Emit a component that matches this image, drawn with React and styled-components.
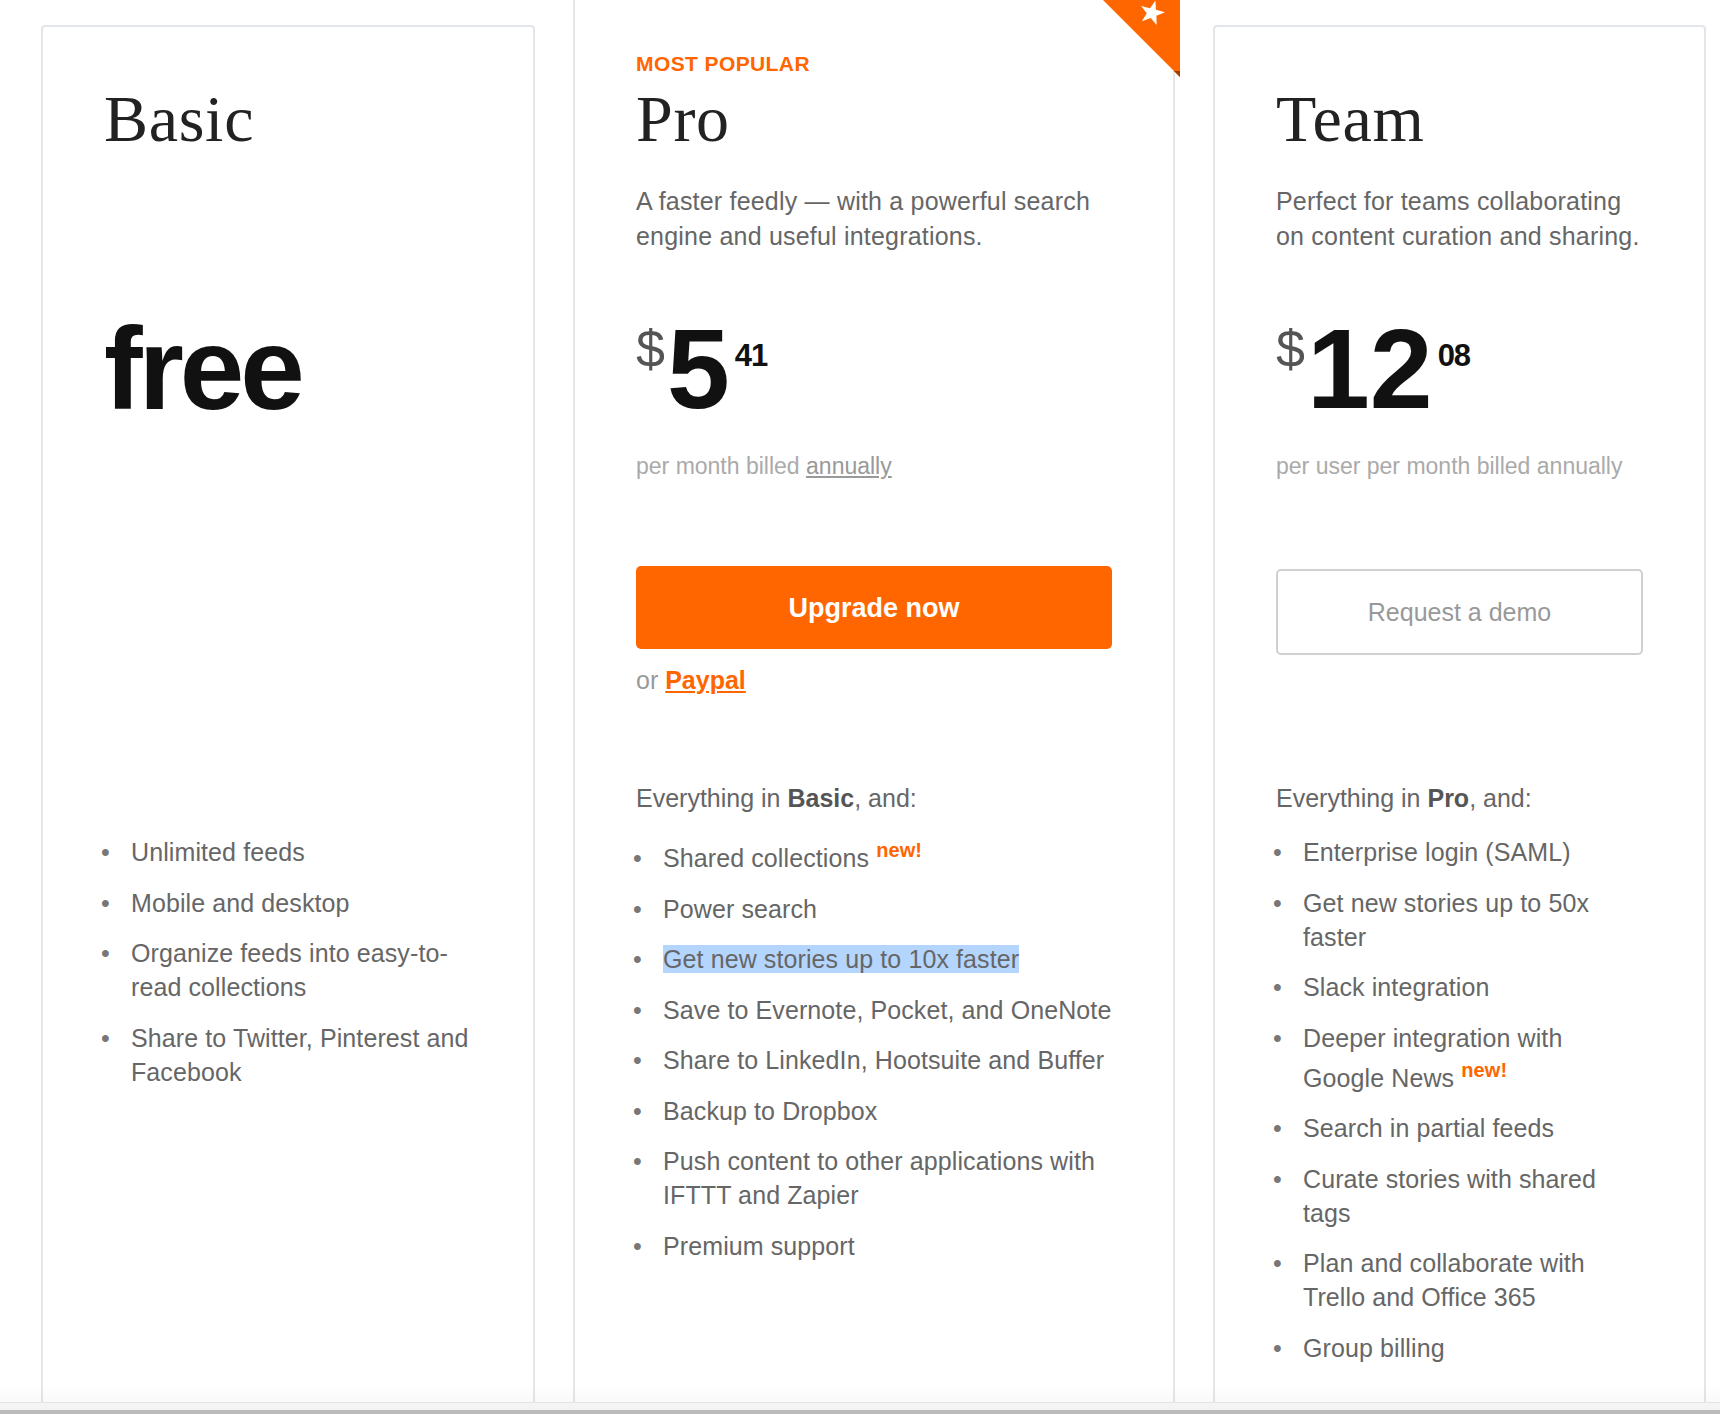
import React from "react";
import styled, { createGlobalStyle } from "styled-components";

const GlobalStyle = createGlobalStyle`
  html, body {
    margin: 0;
    padding: 0;
    background: #fff;
  }
  body {
    font-family: "Liberation Sans", Arial, sans-serif;
    -webkit-font-smoothing: antialiased;
  }
`;

const Page = styled.div`
  height: 100vh;
  display: flex;
  flex-direction: column;
  overflow: hidden;
`;

const Main = styled.main`
  flex: 1;
  position: relative;
  overflow: hidden;

  &::after {
    content: "";
    position: absolute;
    left: 0;
    right: 0;
    bottom: 0;
    height: 16px;
    background: linear-gradient(rgba(0, 0, 0, 0), rgba(0, 0, 0, 0.025));
    pointer-events: none;
  }
`;

const Plans = styled.div`
  display: grid;
  grid-template-columns: 494px 602px 493px;
  column-gap: 38px;
  padding-left: 41px;
  height: 100%;
`;

const Card = styled.section`
  position: relative;
  box-sizing: border-box;
  background: #fff;
  border: 2px solid #e2e6ea;
  border-bottom: none;
  border-top-width: ${(p) => (p.$featured ? 0 : 2)}px;
  border-radius: ${(p) => (p.$featured ? "0" : "4px 4px 0 0")};
  margin-top: ${(p) => (p.$featured ? 0 : 25)}px;
  padding: ${(p) => (p.$featured ? 52 : 25)}px 61px 0;
`;

const Ribbon = styled.svg`
  position: absolute;
  top: 0;
  right: -7px;
  width: 77px;
  height: 77px;
`;

const Eyebrow = styled.div`
  height: 24px;
  font-size: 21px;
  line-height: 24px;
  font-weight: bold;
  letter-spacing: 0.4px;
  color: #ff6600;
`;

const PlanName = styled.h2`
  margin: 7px 0 0;
  font-family: "Liberation Serif", "Times New Roman", serif;
  font-weight: normal;
  font-size: 66px;
  line-height: 72px;
  letter-spacing: 0.7px;
  color: #222;
`;

const Blurb = styled.p`
  margin: 29px 0 0;
  min-height: 70px;
  font-size: 25px;
  line-height: 35px;
  letter-spacing: 0.2px;
  color: #666;
  white-space: nowrap;
`;

const PriceRow = styled.div`
  margin-top: 59px;
  height: 113px;
  display: flex;
  align-items: flex-start;
  color: #111;
`;

const Currency = styled.span`
  margin: 10px 2px 0 0;
  font-size: 52px;
  line-height: 52px;
  font-weight: 300;
  color: #555;
`;

const Amount = styled.span`
  font-size: 113px;
  line-height: 113px;
  font-weight: bold;
`;

const Cents = styled.span`
  margin: 27px 0 0 5px;
  font-size: 31px;
  line-height: 31px;
  font-weight: bold;
  letter-spacing: -1px;
`;

const FreeLabel = styled.span`
  font-size: 116px;
  line-height: 113px;
  font-weight: bold;
  letter-spacing: -4px;
`;

const Billing = styled.div`
  margin-top: 25px;
  height: 30px;
  font-size: 23px;
  line-height: 30px;
  color: #aaa;

  a {
    color: #999;
    text-decoration: underline;
  }
`;

const Cta = styled.div`
  height: 302px;
  display: flex;
  flex-direction: column;
`;

const PrimaryButton = styled.button`
  margin-top: 85px;
  height: 83px;
  width: 100%;
  padding-top: 3px;
  border: none;
  border-radius: 5px;
  background: #ff6600;
  color: #fff;
  font-family: "Liberation Sans", Arial, sans-serif;
  font-size: 27px;
  font-weight: bold;
  cursor: pointer;
`;

const GhostButton = styled.button`
  margin-top: 88px;
  height: 86px;
  width: 100%;
  box-sizing: border-box;
  border: 2px solid #d0d0d0;
  border-radius: 5px;
  background: #fff;
  color: #999;
  font-family: "Liberation Sans", Arial, sans-serif;
  font-size: 25px;
  cursor: pointer;
`;

const AltPay = styled.div`
  margin-top: 16px;
  font-size: 25px;
  line-height: 30px;
  color: #999;

  a {
    color: #ff6600;
    font-weight: bold;
    text-decoration: underline;
  }
`;

const Intro = styled.div`
  height: 30px;
  font-size: 25px;
  line-height: 30px;
  color: #666;

  b {
    color: #555;
  }
`;

const FeatureList = styled.ul`
  list-style: none;
  margin: 22px 0 0;
  padding: 0;
`;

const Feature = styled.li`
  padding-left: 27px;
  margin-bottom: 16.5px;
  font-size: 25px;
  line-height: 34px;
  letter-spacing: 0.1px;
  color: #666;
  white-space: nowrap;

  &::before {
    content: "•";
    display: inline-block;
    width: 30px;
    margin-left: -30px;
    color: #777;
  }
`;

const NewTag = styled.sup`
  font-size: 20px;
  line-height: 30px;
  font-weight: bold;
  vertical-align: 10px;
  color: #ff6600;
`;

const Selected = styled.span`
  background: #b4d5fe;
`;

const ScrollTrack = styled.div`
  flex: 0 0 12px;
  box-sizing: border-box;
  border-top: 1px solid #e5e5e5;
  background: #f4f4f4;
  padding-top: 7px;
`;

const ScrollThumb = styled.div`
  height: 4px;
  background: #bbb;
`;

const basicFeatures = [
  "Unlimited feeds",
  "Mobile and desktop",
  <>Organize feeds into easy-to-<br />read collections</>,
  <>Share to Twitter, Pinterest and<br />Facebook</>,
];

const proFeatures = [
  <>Shared collections <NewTag>new!</NewTag></>,
  "Power search",
  <Selected>Get new stories up to 10x faster</Selected>,
  "Save to Evernote, Pocket, and OneNote",
  "Share to LinkedIn, Hootsuite and Buffer",
  "Backup to Dropbox",
  <>Push content to other applications with<br />IFTTT and Zapier</>,
  "Premium support",
];

const teamFeatures = [
  "Enterprise login (SAML)",
  <>Get new stories up to 50x<br />faster</>,
  "Slack integration",
  <>Deeper integration with<br />Google News <NewTag>new!</NewTag></>,
  "Search in partial feeds",
  <>Curate stories with shared<br />tags</>,
  <>Plan and collaborate with<br />Trello and Office 365</>,
  "Group billing",
];

const StarRibbon = () => (
  <Ribbon viewBox="0 0 77 77">
    <polygon points="0,0 77,0 77,77" fill="#ff6600" />
    <polygon points="71,71 77,71 77,77" fill="#9c3d00" />
    <polygon
      points="52.4,0.4 53,9.7 62,12.3 53.4,15.8 53.7,25.1 47.7,18 38.9,21.2 43.8,13.3 38.1,5.9 47.1,8.2"
      fill="#fff"
    />
  </Ribbon>
);

const Features = ({ items }) => (
  <FeatureList>
    {items.map((item, i) => (
      <Feature key={i}>{item}</Feature>
    ))}
  </FeatureList>
);

const Price = ({ whole, cents }) => (
  <PriceRow>
    <Currency>$</Currency>
    <Amount>{whole}</Amount>
    <Cents>{cents}</Cents>
  </PriceRow>
);

export default function App() {
  return (
    <Page>
      <GlobalStyle />
      <Main>
        <Plans>
          <Card>
            <Eyebrow />
            <PlanName>Basic</PlanName>
            <Blurb />
            <PriceRow>
              <FreeLabel>free</FreeLabel>
            </PriceRow>
            <Billing />
            <Cta />
            <Intro />
            <Features items={basicFeatures} />
          </Card>

          <Card $featured>
            <StarRibbon />
            <Eyebrow>MOST POPULAR</Eyebrow>
            <PlanName>Pro</PlanName>
            <Blurb>
              A faster feedly — with a powerful search
              <br />
              engine and useful integrations.
            </Blurb>
            <Price whole="5" cents="41" />
            <Billing>
              per month billed <a>annually</a>
            </Billing>
            <Cta>
              <PrimaryButton>Upgrade now</PrimaryButton>
              <AltPay>
                or <a>Paypal</a>
              </AltPay>
            </Cta>
            <Intro>
              Everything in <b>Basic</b>, and:
            </Intro>
            <Features items={proFeatures} />
          </Card>

          <Card>
            <Eyebrow />
            <PlanName>Team</PlanName>
            <Blurb>
              Perfect for teams collaborating
              <br />
              on content curation and sharing.
            </Blurb>
            <Price whole="12" cents="08" />
            <Billing>per user per month billed annually</Billing>
            <Cta>
              <GhostButton>Request a demo</GhostButton>
            </Cta>
            <Intro>
              Everything in <b>Pro</b>, and:
            </Intro>
            <Features items={teamFeatures} />
          </Card>
        </Plans>
      </Main>
      <ScrollTrack>
        <ScrollThumb />
      </ScrollTrack>
    </Page>
  );
}
